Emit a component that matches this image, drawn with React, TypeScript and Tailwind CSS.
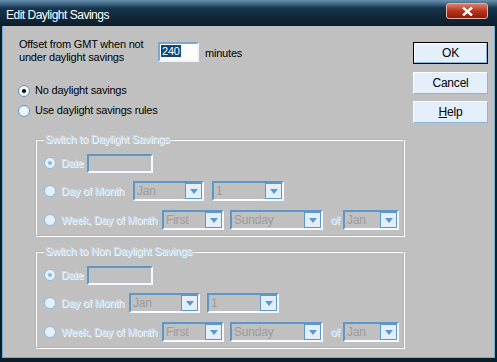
import type { ReactNode } from 'react';

const dis = 'text-[#c4ddf1] [text-shadow:1px_1px_0_#f6fbff]';

function Radio({ checked = false, disabled = false }: { checked?: boolean; disabled?: boolean }) {
  return (
    <span
      className={`w-[12px] h-[12px] rounded-full border shrink-0 flex items-center justify-center ${
        disabled ? 'border-[#8dbde0] bg-[#e6f0fa]' : 'border-[#5f95bf] bg-[#eef5fc]'
      }`}
    >
      {checked && (
        <span className={`w-[4px] h-[4px] rounded-full ${disabled ? 'bg-[#93b6d2]' : 'bg-black'}`} />
      )}
    </span>
  );
}

function Combo({ text, className }: { text: string; className: string }) {
  return (
    <div
      className={`flex h-[20px] border-2 border-t-[#5b98c9] border-l-[#5b98c9] border-b-[#f6faff] border-r-[#f6faff] ${className}`}
    >
      <span className="flex-1 pl-[2px] leading-[16px] text-[#9c9c9c] text-[12px]">{text}</span>
      <span className="w-[17px] h-full bg-[#e4eefa] border border-[#5b98c9] flex items-center justify-center">
        <svg width="8" height="5" viewBox="0 0 8 5">
          <path d="M0 0H8L4 5Z" fill="#5b98c9" />
        </svg>
      </span>
    </div>
  );
}

function Field({ className }: { className: string }) {
  return (
    <div
      className={`h-[19px] border-2 border-t-[#5b98c9] border-l-[#5b98c9] border-b-[#f6faff] border-r-[#f6faff] ${className}`}
    />
  );
}

function Row({ children, className = '' }: { children: ReactNode; className?: string }) {
  return <div className={`flex items-center h-[20px] ${className}`}>{children}</div>;
}

function Group({ title, dayLabel, dayGap, jan, one }: { title: string; dayLabel: string; dayGap: string; jan: string; one: string }) {
  return (
    <div className="relative ml-[32px] w-[369px] h-[97px] border border-[#8cc0e4] shadow-[inset_1px_1px_0_#fff,1px_1px_0_#fff] pt-[13px] pl-[8px]">
      <span className={`absolute -top-[7px] left-[8px] px-[1px] bg-[#c0c0c0] leading-[13px] ${dis}`}>{title}</span>
      <Row>
        <Radio checked disabled />
        <span className={`ml-[5px] w-[26px] ${dis}`}>Date</span>
        <Field className="w-[66px]" />
      </Row>
      <Row className="mt-[8px]">
        <Radio disabled />
        <span className={`ml-[5px] ${dayGap} ${dis}`}>{dayLabel}</span>
        <Combo text="Jan" className={jan} />
        <Combo text="1" className={one} />
      </Row>
      <Row className="mt-[9px]">
        <Radio disabled />
        <span className={`ml-[5px] w-[101px] whitespace-nowrap ${dis}`}>Week, Day of Month</span>
        <Combo text="First" className="w-[62px]" />
        <Combo text="Sunday" className="w-[93px] ml-[6px]" />
        <span className={`ml-[4px] w-[16px] text-center ${dis}`}>of</span>
        <Combo text="Jan" className="w-[56px]" />
      </Row>
    </div>
  );
}

function Btn({ children, def = false }: { children: ReactNode; def?: boolean }) {
  return (
    <div className={`w-[75px] h-[22px] ${def ? 'border border-black' : ''}`}>
      <div className="w-full h-full bg-[#e5eefb] border border-t-white border-l-white border-r-[#86b4da] border-b-[#86b4da] flex items-center justify-center text-black">
        {children}
      </div>
    </div>
  );
}

export default function App() {
  return (
    <div className="w-[497px] h-[362px] flex flex-col bg-[#0b1d2a] font-['Liberation_Sans',Arial,sans-serif] text-[11px] tracking-[-0.2px] overflow-hidden">
      <div className="h-[26px] shrink-0 flex bg-[linear-gradient(to_bottom,#6a92ae_0px,#3d6684_4px,#17354c_8px,#0c1d2b_26px)]">
        <span className="pl-[6px] pt-[8px] text-white text-[12px] tracking-[-0.5px] leading-[14px]">Edit Daylight Savings</span>
        <div className="ml-auto mr-[9px] mt-[3px] w-[42px] h-[16px] rounded-[3px] border border-[#e9b0a2] bg-[linear-gradient(to_bottom,#d9806a,#b8341f_50%,#8e1c0e)] flex items-center justify-center">
          <svg width="11" height="9" viewBox="0 0 11 9">
            <path d="M1 0.5L10 8.5M10 0.5L1 8.5" stroke="#fff" strokeWidth="2.4" />
          </svg>
        </div>
      </div>
      <div className="flex-1 px-[2px] pb-[4px]">
        <div className="h-full flex bg-[#c0c0c0] border-l border-r border-b border-[#78acd0] text-black">
          <div className="w-[405px] shrink-0 flex flex-col">
            <div className="flex items-start pt-[12px] pl-[16px] leading-[13px]">
              <div className="w-[139px]">
                Offset from GMT when not
                <br />
                under daylight savings
              </div>
              <div className="mt-[4px] w-[41px] h-[20px] bg-white border-2 border-t-[#7aa7cc] border-l-[#7aa7cc] border-b-[#eef4fa] border-r-[#eef4fa] pl-[1px] pt-[1px]">
                <span className="bg-[#11487a] text-white leading-[13px] px-[1px]">240</span>
              </div>
              <span className="ml-[6px] mt-[9px]">minutes</span>
            </div>
            <div className="flex items-center h-[13px] mt-[20px] pl-[15px] leading-[13px]">
              <Radio checked />
              <span className="ml-[5px]">No daylight savings</span>
            </div>
            <div className="flex items-center h-[13px] mt-[7px] pl-[15px] leading-[13px]">
              <Radio />
              <span className="ml-[5px]">Use daylight savings rules</span>
            </div>
            <div className="mt-[22px]">
              <Group title="Switch to Daylight Savings" dayLabel="Day of Month" dayGap="w-[72px]" jan="w-[71px]" one="w-[72px] ml-[8px]" />
            </div>
            <div className="mt-[15px]">
              <Group title="Switch to Non Daylight Savings" dayLabel="Day of Month" dayGap="w-[68px]" jan="w-[71px]" one="w-[72px] ml-[7px]" />
            </div>
          </div>
          <div className="flex flex-col pl-[5px] pt-[16px] text-[12px]">
            <Btn def>OK</Btn>
            <div className="mt-[8px]">
              <Btn>Cancel</Btn>
            </div>
            <div className="mt-[7px]">
              <Btn>
                <span>
                  <span className="underline">H</span>elp
                </span>
              </Btn>
            </div>
          </div>
        </div>
      </div>
    </div>
  );
}
